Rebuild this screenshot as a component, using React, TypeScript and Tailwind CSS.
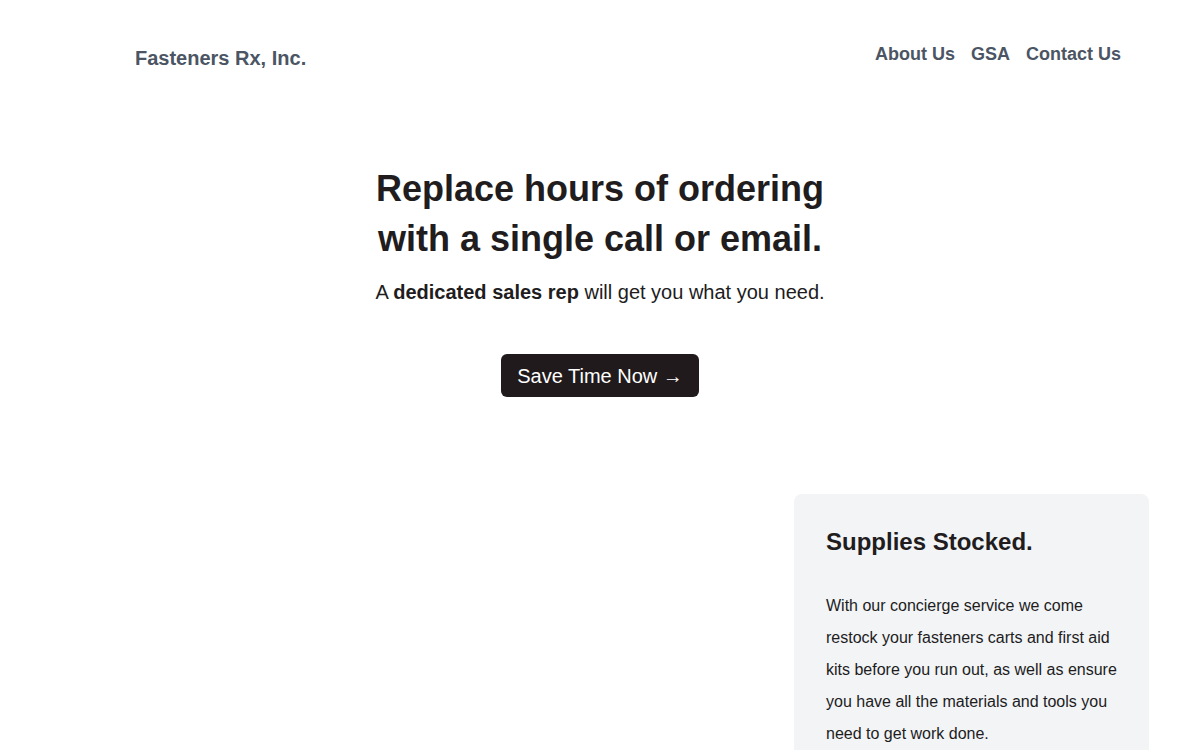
const NAV_ITEMS = ["About Us", "GSA", "Contact Us"];

export default function App() {
  return (
    <div className="min-h-screen bg-white font-['Liberation_Sans',Arial,sans-serif] text-[#211c1d]">
      <header className="flex items-start justify-between pl-[135px] pr-[79px] pt-[40px]">
        <a href="#" className="mt-[4px] text-[20px] font-bold leading-7 text-[#4b5563]">
          Fasteners Rx, Inc.
        </a>
        <nav aria-label="Main navigation">
          <ul className="flex gap-4 text-[18px] font-bold leading-7 text-[#4b5563]">
            {NAV_ITEMS.map((item) => (
              <li key={item}>
                <a href="#">{item}</a>
              </li>
            ))}
          </ul>
        </nav>
      </header>

      <section className="mt-[92px] flex flex-col items-center text-center">
        <h1 className="max-w-[480px] text-[36px] font-bold leading-[50px]">
          Replace hours of ordering with a single call or email.
        </h1>
        <p className="mt-[14px] text-[20px] leading-7">
          A <strong className="font-bold">dedicated sales rep</strong> will get you what you need.
        </p>
        <a
          href="#"
          className="mt-12 rounded-md bg-[#211a1c] px-4 py-[7.5px] text-[20px] leading-7 text-white"
        >
          Save Time Now →
        </a>
      </section>

      <section className="mt-[97px] flex justify-end pr-[51px]">
        <div className="w-[355px] rounded-lg bg-[#f3f4f6] px-8 pb-8 pt-8">
          <h2 className="text-[24px] font-bold leading-8">Supplies Stocked.</h2>
          <p className="mt-8 text-[16px] leading-8 text-[#211c1d]">
            With our concierge service we come restock your fasteners carts and first aid kits
            before you run out, as well as ensure you have all the materials and tools you need to
            get work done.
          </p>
        </div>
      </section>
    </div>
  );
}
